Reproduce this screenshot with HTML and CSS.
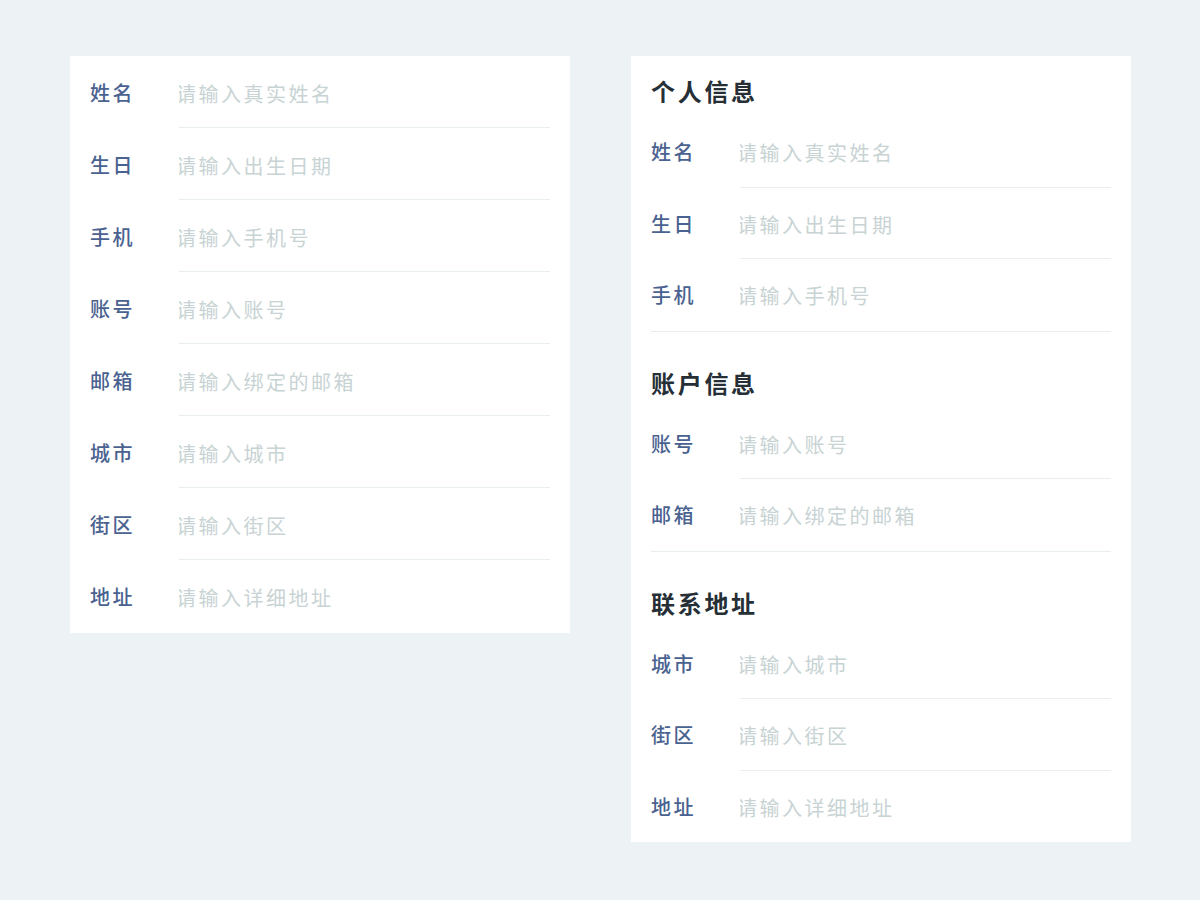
FILE: index.html
```html
<!DOCTYPE html>
<html lang="zh-CN">
<head>
  <meta charset="UTF-8"/>
  <meta name="viewport" content="width=device-width, initial-scale=1.0"/>
  <title>表单分组</title>
  <link rel="stylesheet" href="styles.css">
</head>
<body>
  <div class="page">

    <!-- 不分组 -->
    <div class="card card-plain">
      <div class="field">
        <label class="field-label">姓名</label>
        <input class="field-input" type="text" placeholder="请输入真实姓名">
      </div>
      <div class="field">
        <label class="field-label">生日</label>
        <input class="field-input" type="text" placeholder="请输入出生日期">
      </div>
      <div class="field">
        <label class="field-label">手机</label>
        <input class="field-input" type="text" placeholder="请输入手机号">
      </div>
      <div class="field">
        <label class="field-label">账号</label>
        <input class="field-input" type="text" placeholder="请输入账号">
      </div>
      <div class="field">
        <label class="field-label">邮箱</label>
        <input class="field-input" type="text" placeholder="请输入绑定的邮箱">
      </div>
      <div class="field">
        <label class="field-label">城市</label>
        <input class="field-input" type="text" placeholder="请输入城市">
      </div>
      <div class="field">
        <label class="field-label">街区</label>
        <input class="field-input" type="text" placeholder="请输入街区">
      </div>
      <div class="field">
        <label class="field-label">地址</label>
        <input class="field-input" type="text" placeholder="请输入详细地址">
      </div>
    </div>

    <!-- 分组 -->
    <div class="card card-grouped">
      <div class="group">
        <h2 class="group-title">个人信息</h2>
        <div class="field">
          <label class="field-label">姓名</label>
          <input class="field-input" type="text" placeholder="请输入真实姓名">
        </div>
        <div class="field">
          <label class="field-label">生日</label>
          <input class="field-input" type="text" placeholder="请输入出生日期">
        </div>
        <div class="field">
          <label class="field-label">手机</label>
          <input class="field-input" type="text" placeholder="请输入手机号">
        </div>
      </div>
      <div class="group">
        <h2 class="group-title">账户信息</h2>
        <div class="field">
          <label class="field-label">账号</label>
          <input class="field-input" type="text" placeholder="请输入账号">
        </div>
        <div class="field">
          <label class="field-label">邮箱</label>
          <input class="field-input" type="text" placeholder="请输入绑定的邮箱">
        </div>
      </div>
      <div class="group">
        <h2 class="group-title">联系地址</h2>
        <div class="field">
          <label class="field-label">城市</label>
          <input class="field-input" type="text" placeholder="请输入城市">
        </div>
        <div class="field">
          <label class="field-label">街区</label>
          <input class="field-input" type="text" placeholder="请输入街区">
        </div>
        <div class="field">
          <label class="field-label">地址</label>
          <input class="field-input" type="text" placeholder="请输入详细地址">
        </div>
      </div>
    </div>

  </div>
</body>
</html>
```

FILE: styles.css
```css
html, body {
  margin: 0;
  padding: 0;
  background-color: #edf2f5;
  font-family: "Noto Sans CJK SC", "Noto Sans", sans-serif;
}

.page {
  display: flex;
  align-items: flex-start;
  gap: 61px;
  padding: 56px 0 0 70px;
}

.card {
  width: 500px;
  background-color: #fff;
  padding: 0 20px;
  box-sizing: border-box;
}

.card-plain {
  padding-bottom: 1px;
}

/* 分组 */
.group + .group {
  margin-top: 16px;
}

.group-title {
  margin: 0 0 11px;
  padding-top: 21px;
  font-size: 24px;
  line-height: 28px;
  font-weight: bold;
  letter-spacing: 2.7px;
  color: #262f36;
}

.group:not(:last-child) {
  border-bottom: 1px solid #e8edef;
}

/* 表单行 */
.field {
  display: flex;
  align-items: stretch;
  height: 72px;
}

.card-grouped .field {
  height: 71.5px;
}

.field-label {
  flex: 0 0 89px;
  display: flex;
  align-items: center;
  font-size: 20px;
  font-weight: 500;
  letter-spacing: 2.5px;
  color: #4a6290;
}

.field-input {
  flex: 1;
  min-width: 0;
  border: none;
  border-bottom: 1px solid #e8edef;
  outline: none;
  padding: 3px 0 0;
  margin: 0;
  text-indent: -3px;
  background: transparent;
  font-family: inherit;
  font-size: 20px;
  letter-spacing: 2.5px;
  color: #333;
}

.field:last-child .field-input {
  border-bottom-color: transparent;
}

.field-input::placeholder {
  color: #c8d3d4;
  letter-spacing: 2.5px;
}
```
